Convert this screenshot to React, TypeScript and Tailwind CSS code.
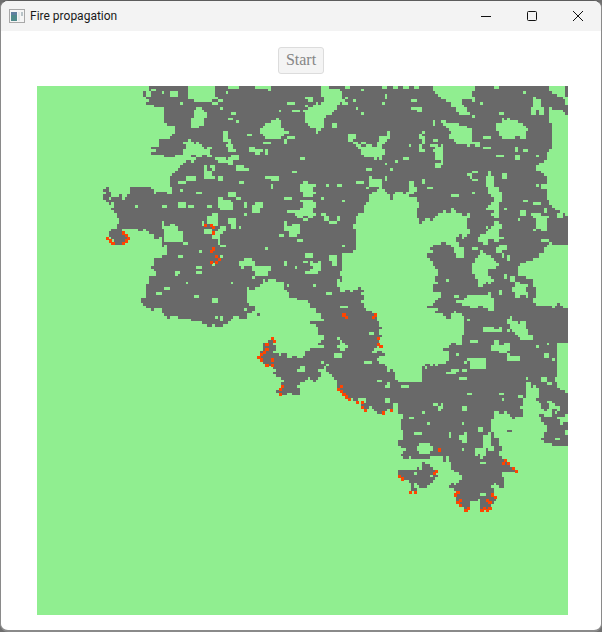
const W = 200;
const H = 200;
const LEFT = 37;
const TOP = 86;
const CW = 531 / W;
const CH = 529 / H;

type Pt = [number, number];

// outline of the burnt area, in screen pixels
const burnt: Pt[] = [
  [148, 86], [148, 93], [145, 93], [145, 102], [153, 102], [153, 107], [164, 107], [164, 118], [161, 120], [168, 123],
  [168, 127], [176, 127], [176, 135], [168, 139], [159, 139], [159, 147], [145, 148], [153, 152], [165, 156], [185, 156],
  [197, 160], [187, 163], [177, 168], [170, 175], [172, 187], [168, 192], [153, 193], [152, 187], [132, 187], [128, 195],
  [113, 197], [112, 200], [110, 192], [107, 184], [103, 184], [103, 192], [106, 200], [113, 205], [116, 215], [119, 223],
  [117, 228], [108, 229], [108, 238], [112, 243], [123, 243], [128, 237], [123, 230], [143, 230], [148, 235], [160, 238],
  [163, 243], [168, 257], [153, 258], [153, 268], [157, 273], [147, 280], [145, 297], [140, 298], [140, 302], [148, 307],
  [162, 310], [162, 315], [185, 317], [193, 322], [210, 325], [223, 328], [230, 318], [247, 317], [252, 310], [260, 315],
  [252, 307], [246, 303], [246, 288], [260, 287], [268, 277], [278, 280], [283, 287], [292, 292], [292, 300], [305, 300],
  [310, 300], [313, 310], [320, 313], [322, 320], [310, 322], [315, 328], [320, 330], [322, 342], [307, 352], [303, 357],
  [290, 358], [285, 355], [275, 352], [275, 340], [272, 338], [265, 343], [260, 353], [258, 358], [265, 365], [273, 367],
  [278, 378], [283, 383], [278, 390], [280, 395], [293, 395], [295, 397], [299, 397], [299, 387], [308, 378], [315, 382],
  [322, 370], [327, 365], [330, 375], [337, 383], [338, 388], [347, 397], [355, 402], [362, 405], [364, 410], [373, 407],
  [375, 412], [387, 413], [390, 408], [398, 405], [403, 432], [398, 445], [407, 450], [403, 457], [420, 460], [423, 468],
  [400, 470], [400, 477], [412, 482], [412, 492], [416, 492], [416, 483], [423, 489], [432, 483], [432, 480], [443, 478],
  [432, 473], [437, 470], [423, 463], [433, 457], [443, 455], [452, 470], [462, 477], [463, 482], [448, 483], [457, 493],
  [457, 503], [465, 510], [472, 500], [480, 497], [480, 510], [490, 508], [495, 497], [492, 483], [503, 488], [503, 473],
  [515, 472], [505, 460], [500, 455], [500, 437], [492, 435], [492, 428], [505, 432], [510, 432], [510, 422], [522, 418],
  [525, 403], [533, 410], [545, 423], [545, 435], [540, 438], [547, 445], [568, 445], [568, 390], [557, 390], [557, 343],
  [568, 343], [568, 310], [557, 305], [548, 307], [537, 307], [533, 277], [517, 277], [517, 267], [535, 258], [550, 243],
  [568, 243], [568, 215], [560, 213], [548, 200], [548, 177], [533, 170], [548, 157], [553, 130], [548, 110], [560, 110],
  [568, 118], [568, 86],
];

// green patches inside the burnt area
const patches: Pt[][] = [
  // the big bay in the middle
  [[372, 193], [355, 220], [355, 250], [342, 253], [338, 293], [363, 287], [366, 310], [377, 313], [382, 330], [378, 350],
   [383, 353], [378, 360], [390, 370], [397, 375], [397, 382], [415, 383], [423, 383], [423, 368], [437, 363], [447, 363],
   [447, 353], [443, 347], [462, 343], [462, 332], [467, 320], [460, 310], [450, 317], [438, 313], [427, 307], [437, 300],
   [440, 293], [430, 290], [438, 280], [435, 267], [427, 253], [438, 243], [447, 243], [458, 258], [467, 257], [458, 240],
   [468, 233], [468, 213], [447, 212], [427, 220], [420, 225], [417, 213], [418, 200], [408, 193], [395, 193], [390, 198],
   [385, 187]],
  [[188, 86], [213, 86], [213, 100], [203, 103], [188, 100]],
  [[193, 110], [205, 110], [205, 122], [198, 128], [193, 128]],
  [[262, 126], [270, 120], [278, 120], [283, 130], [283, 136], [270, 138], [262, 138]],
  [[183, 143], [190, 140], [212, 150], [212, 155], [197, 155], [183, 157]],
  [[213, 155], [226, 158], [237, 157], [237, 163], [220, 162]],
  [[203, 168], [214, 168], [214, 177], [203, 177]],
  [[185, 178], [196, 177], [194, 183], [185, 183]],
  [[217, 200], [230, 197], [232, 211], [221, 213]],
  [[250, 203], [260, 202], [260, 213], [252, 213]],
  [[288, 209], [300, 207], [300, 217], [288, 213]],
  [[284, 223], [300, 225], [300, 237], [290, 237]],
  [[164, 226], [176, 225], [183, 235], [183, 243], [172, 243], [164, 237]],
  [[205, 216], [217, 213], [217, 223], [208, 223]],
  [[228, 218], [236, 218], [237, 228], [232, 228]],
  [[213, 230], [222, 232], [222, 243], [215, 240]],
  [[240, 260], [252, 255], [252, 267], [240, 267]],
  [[252, 266], [265, 266], [265, 278], [252, 278]],
  [[270, 178], [280, 177], [277, 183], [270, 183]],
  [[243, 165], [252, 165], [252, 170], [243, 170]],
  [[250, 148], [262, 148], [262, 152], [250, 152]],
  [[226, 143], [235, 145], [237, 152], [228, 152]],
  [[213, 97], [225, 97], [225, 102], [213, 102]],
  [[222, 132], [228, 132], [228, 140], [224, 140]],
  [[305, 108], [323, 102], [323, 86], [340, 90], [345, 100], [328, 118], [320, 135], [312, 128], [305, 123]],
  [[432, 86], [475, 86], [475, 100], [463, 100], [468, 113], [458, 113], [450, 103], [433, 93]],
  [[549, 86], [566, 86], [566, 98], [549, 92]],
  [[533, 99], [543, 99], [543, 112], [533, 112]],
  [[432, 120], [457, 125], [472, 127], [472, 140], [477, 143], [467, 147], [450, 137], [447, 127]],
  [[497, 122], [515, 118], [527, 126], [525, 136], [505, 138], [497, 130]],
  [[350, 142], [373, 145], [380, 138], [393, 128], [383, 143], [383, 160], [360, 157], [357, 147]],
  [[422, 132], [424, 132], [424, 153], [420, 153]],
  [[435, 147], [443, 145], [443, 162], [436, 160]],
  [[300, 182], [315, 182], [315, 195], [300, 195]],
  [[300, 200], [313, 200], [313, 218], [300, 218]],
  [[485, 173], [491, 177], [500, 193], [500, 207], [507, 207], [497, 213], [483, 212], [493, 200], [485, 187]],
  [[370, 177], [382, 178], [382, 188], [372, 188]],
  [[407, 182], [415, 182], [415, 193], [407, 193]],
  [[469, 176], [477, 176], [477, 180], [469, 180]],
  [[322, 212], [337, 225], [333, 225], [322, 218]],
  [[533, 215], [548, 215], [548, 230], [535, 230]],
  [[477, 240], [495, 222], [500, 222], [497, 240], [482, 240]],
  [[480, 250], [498, 263], [498, 270], [487, 270], [492, 280], [482, 287], [473, 273], [472, 265]],
  [[312, 262], [322, 262], [322, 273], [310, 273]],
  [[507, 318], [512, 318], [531, 332], [531, 340], [522, 340], [507, 328]],
  [[513, 283], [527, 283], [527, 297], [513, 297]],
  [[463, 295], [493, 295], [493, 307], [470, 307]],
  [[467, 358], [485, 358], [485, 370], [470, 370]],
  [[492, 345], [508, 345], [508, 353], [492, 353]],
  [[508, 355], [520, 355], [520, 361], [508, 361]],
  [[485, 327], [502, 327], [502, 332], [485, 332]],
  [[448, 370], [457, 370], [457, 373], [448, 373]],
  [[417, 442], [430, 442], [430, 453], [417, 453]],
  [[483, 435], [492, 435], [492, 450], [483, 450]],
  [[477, 450], [485, 450], [485, 455], [477, 455]],
  [[462, 435], [469, 435], [469, 442], [462, 442]],
  [[543, 375], [550, 375], [550, 382], [543, 382]],
  [[525, 383], [538, 388], [537, 403], [547, 412], [547, 415], [530, 410], [520, 407], [525, 397]],
  [[547, 400], [553, 400], [553, 417], [547, 417]],
  [[557, 418], [568, 418], [568, 423], [557, 423]],
  [[492, 412], [505, 412], [520, 420], [503, 432], [492, 430]],
  [[487, 300], [493, 300], [493, 310], [487, 310]],
  [[338, 338], [350, 345], [345, 350], [338, 347]],
  [[372, 345], [378, 345], [378, 352], [372, 352]],
  [[360, 400], [366, 397], [366, 403], [360, 403]],
  [[315, 338], [321, 338], [321, 345], [315, 345]],
];

// cells on fire, screen pixels
const fire: Pt[] = [
  [107, 238], [109, 240], [112, 243], [123, 232], [125, 235], [128, 238], [125, 240], [123, 243], [205, 224], [210, 224],
  [213, 227], [213, 232], [213, 248], [210, 251], [216, 256], [218, 259], [216, 262], [210, 262], [272, 338], [274, 341],
  [267, 343], [267, 348], [263, 351], [261, 354], [258, 357], [261, 359], [272, 359], [272, 364], [267, 364], [282, 386],
  [280, 388], [280, 393], [343, 314], [346, 317], [376, 314], [373, 317], [378, 338], [378, 343], [380, 346], [341, 386],
  [338, 388], [341, 391], [343, 393], [346, 396], [349, 399], [357, 401], [362, 401], [362, 407], [364, 409], [383, 412],
  [391, 409], [439, 451], [505, 459], [503, 462], [508, 462], [513, 467], [516, 470], [436, 470], [434, 473], [399, 475],
  [402, 478], [409, 491], [415, 491], [457, 491], [455, 494], [460, 499], [458, 502], [460, 505], [468, 507], [465, 510],
  [492, 494], [495, 497], [487, 499], [489, 502], [489, 507], [484, 507], [487, 510], [481, 510],
];

function inside(poly: Pt[], x: number, y: number) {
  let hit = false;
  for (let i = 0, j = poly.length - 1; i < poly.length; j = i++) {
    const [xi, yi] = poly[i];
    const [xj, yj] = poly[j];
    if (yi > y !== yj > y && x < ((xj - xi) * (y - yi)) / (yj - yi) + xi) hit = !hit;
  }
  return hit;
}

function noise(c: number, r: number, k: number) {
  const s = Math.sin(c * 127.1 + r * 311.7 + k * 74.7) * 43758.5453;
  return s - Math.floor(s);
}

function buildPaths() {
  const grid: boolean[][] = [];
  for (let r = 0; r < H; r++) {
    const row: boolean[] = [];
    for (let c = 0; c < W; c++) {
      // jitter the sample a little so the edges come out ragged
      const x = LEFT + (c + 0.5) * CW + (noise(c >> 1, r >> 1, 1) - 0.5) * 4;
      const y = TOP + (r + 0.5) * CH + (noise(c >> 1, r >> 1, 2) - 0.5) * 4;
      let on = inside(burnt, x, y);
      if (on && patches.some((p) => inside(p, x, y))) on = false;
      row.push(on);
    }
    grid.push(row);
  }
  // small unburnt specks
  for (let r = 0; r < H; r++) {
    for (let c = 0; c < W; c++) {
      const n = noise(c, r, 3);
      if (n < 0.018) {
        const w = n < 0.003 ? 3 : n < 0.009 ? 2 : 1;
        const h = noise(c, r, 4) < 0.35 ? 2 : 1;
        for (let a = 0; a < h; a++) {
          for (let b = 0; b < w; b++) {
            if (grid[r + a] && c + b < W) grid[r + a][c + b] = false;
          }
        }
      }
    }
  }
  let d = "";
  for (let r = 0; r < H; r++) {
    let c = 0;
    while (c < W) {
      if (!grid[r][c]) {
        c++;
        continue;
      }
      const start = c;
      while (c < W && grid[r][c]) c++;
      d += `M${start} ${r}h${c - start}v1h${start - c}z`;
    }
  }
  let f = "";
  for (const [x, y] of fire) {
    const c = Math.floor((x - LEFT) / CW);
    const r = Math.floor((y - TOP) / CH);
    f += `M${c} ${r}h1.2v1.2h-1.2z`;
  }
  return { d, f };
}

const paths = buildPaths();

export default function App() {
  return (
    <div className="h-[632px] w-[602px] overflow-hidden bg-[#6f6f6f]">
      <div className="flex h-[632px] flex-col overflow-hidden rounded-[8px] border border-b-2 border-[#8a8a8a] border-t-[#5c5c5c] bg-white">
        <div className="flex h-[30px] shrink-0 items-center bg-[#f3f3f3] pl-2 font-['Roboto',sans-serif] text-[12px] text-[#1a1a1a]">
          <svg width="16" height="14" viewBox="0 0 16 14" className="shrink-0">
            <rect x="0.5" y="0.5" width="15" height="13" fill="#f5f5f5" stroke="#a8a8a8" />
            <rect x="2" y="3" width="6" height="9" fill="#4f8a8b" />
            <rect x="2" y="3" width="6" height="3" fill="#5f7f9f" />
            <rect x="9" y="3" width="2" height="9" fill="#e4e8e8" />
            <rect x="12" y="3" width="2" height="4" fill="#b9c4c8" />
          </svg>
          <span className="ml-[5px]">Fire propagation</span>
          <div className="ml-auto flex h-full">
            <div className="flex w-[46px] items-center justify-center">
              <svg width="12" height="12" viewBox="0 0 12 12">
                <path d="M1 6.5h10" stroke="#111" strokeWidth="1" />
              </svg>
            </div>
            <div className="flex w-[46px] items-center justify-center">
              <svg width="12" height="12" viewBox="0 0 12 12">
                <rect x="1.5" y="1.5" width="9" height="9" rx="1" fill="none" stroke="#111" />
              </svg>
            </div>
            <div className="flex w-[46px] items-center justify-center">
              <svg width="12" height="12" viewBox="0 0 12 12">
                <path d="M1 1l10 10M11 1L1 11" stroke="#111" strokeWidth="1" />
              </svg>
            </div>
          </div>
        </div>
        <div className="flex flex-col items-center pt-4">
          <button
            type="button"
            disabled
            className="h-[27px] w-[46px] rounded-[3px] border border-[#dcdcdc] bg-[#f4f4f4] pb-[2px] font-['Liberation_Serif',serif] text-[16px] leading-none text-[#868686]"
          >
            Start
          </button>
        </div>
        <div className="mt-3 ml-9">
          <svg
            width="531"
            height="529"
            viewBox={`0 0 ${W} ${H}`}
            preserveAspectRatio="none"
            shapeRendering="crispEdges"
            className="block bg-[#90ee90]"
          >
            <path d={paths.d} fill="#696969" />
            <path d={paths.f} fill="#ff4500" />
          </svg>
        </div>
      </div>
    </div>
  );
}
